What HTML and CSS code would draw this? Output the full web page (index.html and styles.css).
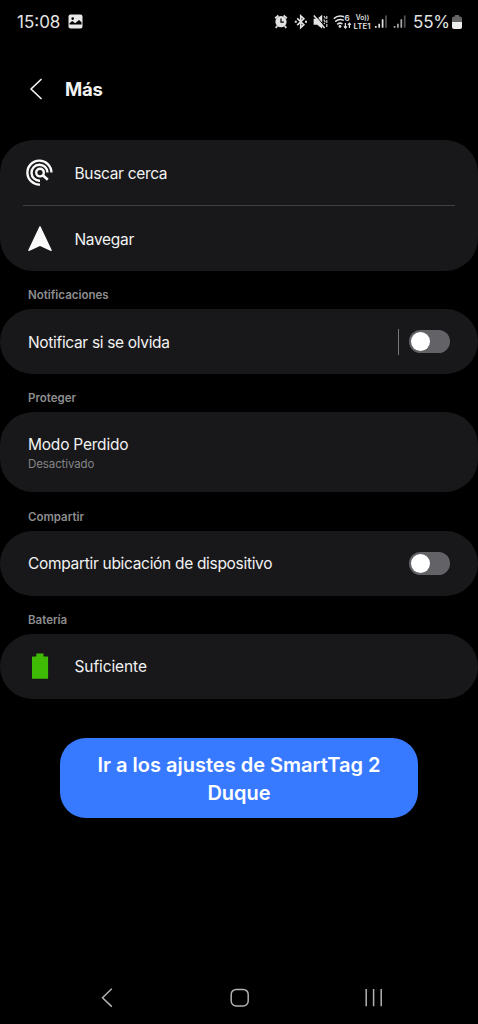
FILE: index.html
```html
<!DOCTYPE html>
<html lang="es">
<head>
<meta charset="utf-8">
<meta name="viewport" content="width=device-width">
<title>Más</title>
<link rel="stylesheet" href="styles.css">
</head>
<body>
<div class="screen">
  <div class="status">
    <span class="time">15:08</span>
    <svg class="photo" width="15" height="15" viewBox="0 0 15 15"><rect x=".5" y=".5" width="14" height="14" rx="2" fill="#e8e8e8"/><circle cx="4.7" cy="4.6" r="1.3" fill="#000"/><path d="M1.5 10.5V9.3L4.2 7l3 2.2L11 6l2.5 2.3v2.2z" fill="#000"/></svg>
    <svg class="indicators" width="136" height="18" viewBox="274 13 136 18" fill="none" stroke="#e2e2e2">
      <circle cx="281" cy="21.7" r="5.6" fill="#e2e2e2" stroke="none"/>
      <path d="M275.2 18.3l3.2-2.8M286.8 18.3l-3.2-2.8M277.3 26l-1.6 1.8M284.7 26l1.6 1.8" stroke-width="1.8"/>
      <path d="M281 18.5v3.7h2.8" stroke="#000" stroke-width="1.2"/>
      <path d="M297.2 18.3l6.7 6.4-3.2 3V15.8l3.2 3-6.7 6.4" stroke-width="1.6"/>
      <path d="M294.8 21.8h2M305 21.8h2" stroke-width="2"/>
      <path d="M313.6 18.8h3.6l5-4v14l-5-4h-3.6z" fill="#e2e2e2" stroke="none"/>
      <path d="M315.4 15l9.4 11.6" stroke="#000" stroke-width="1"/>
      <path d="M313.8 15.4l10.8 12.6" stroke-width="1.5"/>
      <path d="M324 16l1.2 2-1.2 2 1.2 2-1.2 2M326.8 16v11.5" stroke-width="1.1" stroke-dasharray="3 1"/>
      <path d="M333.8 18.6q4.6-4.2 10.2-1.8M335.2 21.6q4-3.4 8.6-1.2M337.2 24.4q2.6-2.2 5.2-.6" stroke-width="1.5"/>
      <circle cx="340" cy="26.4" r="1.4" fill="#e2e2e2" stroke="none"/>
      <path d="M345.4 23v5M343.9 26.3l1.5 1.7 1.5-1.7M349.4 28v-5M347.9 24.8l1.5-1.7 1.5 1.7" stroke-width="1.2"/>
      <g fill="#e2e2e2" stroke="none" font-family="Inter, sans-serif" font-weight="600">
        <text x="344.4" y="21" font-size="8">6</text>
        <text x="355.8" y="19.6" font-size="7" textLength="13.5" lengthAdjust="spacingAndGlyphs">Vo))</text>
        <text x="353.6" y="28.6" font-size="7.4" textLength="17" lengthAdjust="spacingAndGlyphs">LTE1</text>
      </g>
      <g stroke-width="1.7"><path d="M375.8 27.7v-1.7M379.2 27.7v-4M382.6 27.7v-8.5"/><path d="M386 27.7V15.5" stroke="#555"/><path d="M394.6 27.7v-1.7M397.9 27.7v-4M401.3 27.7v-8.5" stroke="#aaa"/><path d="M404.7 27.7V15.5" stroke="#555"/></g>
    </svg>
    <span class="percent">55%</span>
    <svg class="cell" width="10" height="14" viewBox="0 0 10 14"><path d="M3 0h4v1.4h1.2Q10 1.4 10 3.2V7H0V3.2Q0 1.4 1.8 1.4H3z" fill="#656565"/><path d="M0 7h10v5q0 2-2 2H2q-2 0-2-2z" fill="#ededed"/></svg>
  </div>

  <header class="header">
    <svg width="14" height="24" viewBox="0 0 14 24" fill="none" stroke="#f4f4f4" stroke-width="1.7" stroke-linecap="round" stroke-linejoin="round"><path d="M12 2.5 2 12l10 9.5"/></svg>
    <h1>Más</h1>
  </header>

  <section class="card links">
    <div class="row">
      <svg class="icon" width="28" height="28" viewBox="0 0 28 28" fill="none" stroke="#fafafa" stroke-width="2.4"><path d="M14 25.6A12 12 0 1 1 25.4 13.6"/><path d="M14 21.7A8 8 0 1 1 21.5 13.6"/><circle cx="14" cy="13.6" r="3.8"/><path d="m16.8 16.2 5 4.6" stroke-width="2.6"/></svg>
      <span class="label buscar">Buscar cerca</span>
    </div>
    <div class="row">
      <svg class="icon" width="28" height="28" viewBox="0 0 28 28"><path d="M13.3 1.7q.7-1.2 1.4 0l11 23.4q.3 1.2-.9.8L14 21 3.2 25.9q-1.2.4-.9-.8z" fill="#fafafa"/></svg>
      <span class="label navegar">Navegar</span>
    </div>
  </section>

  <h2>Notificaciones</h2>
  <section class="card row">
    <span class="label notificar">Notificar si se olvida</span>
    <span class="split"></span><span class="toggle"></span>
  </section>

  <h2>Proteger</h2>
  <section class="card mode">
    <span class="modo">Modo Perdido</span>
    <small>Desactivado</small>
  </section>

  <h2 class="compartir">Compartir</h2>
  <section class="card row short">
    <span class="label ubicacion">Compartir ubicación de dispositivo</span>
    <span class="toggle alone"></span>
  </section>

  <h2 class="bateria">Batería</h2>
  <section class="card row short">
    <svg class="icon" width="28" height="28" viewBox="0 0 28 28"><path d="M10.3 1.5h7.2v3h4q.6 0 .6.6v21q0 .6-.6.6H6.6q-.6 0-.6-.6v-21q0-.6.6-.6h3.7z" fill="#3fbb05"/></svg>
    <span class="label suficiente">Suficiente</span>
  </section>

  <button class="settings"><span>Ir a los ajustes de SmartTag 2</span><span>Duque</span></button>

  <nav class="nav">
    <svg width="280" height="22" viewBox="0 0 280 22" fill="none" stroke="#b2b2b2" stroke-width="1.5"><path d="M11.8 2.8 2.5 11.8l9.3 8.8"/><rect x="131.2" y="3.4" width="17" height="16.5" rx="5"/><path d="M266.2 3v17.2M273.6 3v17.2M281.2 3v17.2"/></svg>
  </nav>
</div>
</body>
</html>
```
FILE: styles.css
```css
* { box-sizing: border-box; }
body { margin: 0; background: #000; }
.screen {
  width: 478px;
  height: 1024px;
  display: flex;
  flex-direction: column;
  overflow: hidden;
  background: #000;
  color: #f2f2f2;
  font-family: Inter, Roboto, sans-serif;
  font-size: 15.5px;
  white-space: nowrap;
}
.status { height: 43px; padding: 0 16px 0 17px; display: flex; align-items: center; flex: none; }
.time { width: 51px; font-size: 17px; color: #e4e4e4; }
.indicators { margin-left: 191px; }
.percent { width: 39px; margin-left: 3px; font-size: 17px; letter-spacing: -.2px; color: #e4e4e4; }
.cell { flex: none; }
.header { height: 97px; padding: 0 29px 5px; display: flex; align-items: center; gap: 22px; flex: none; }
h1 { margin: 0; font-size: 18.5px; font-weight: 700; letter-spacing: -.3px; }
.card { background: #18181a; border-radius: 33px; flex: none; height: 65px; }
.row { display: flex; align-items: center; padding: 0 28px; }
.links { height: 131px; }
.links .row { height: 65px; }
.links .row + .row { height: 66px; margin: 0 23px; padding: 0 5px; border-top: 1px solid #414143; }
.short { height: 64.5px; }
.icon { flex: none; margin: 0 20.5px 0 -2px; }
.label { line-height: 20px; padding-top: 2px; }
.buscar { letter-spacing: -.32px; }
.navegar { letter-spacing: -.32px; }
.notificar { letter-spacing: -.33px; }
.ubicacion { letter-spacing: -.31px; }
.modo { letter-spacing: -.22px; line-height: 22px; }
.suficiente { letter-spacing: -.1px; }
h2 { margin: 0; padding: 0 28px; height: 38px; line-height: 48px; font-size: 11.5px; font-weight: 600; color: #8d8d8f; flex: none; }
.mode { height: 80px; padding: 22px 28px 0; display: flex; flex-direction: column; }
small { font-size: 11.5px; line-height: 16px; letter-spacing: -.1px; color: #858587; }
.compartir { height: 39px; line-height: 50px; }
.bateria { height: 38.5px; }
.split { width: 1px; height: 26px; background: #777779; margin-left: auto; }
.toggle { width: 41px; height: 23px; padding: 2px; border-radius: 12px; background: #636367; margin-left: 10.5px; }
.toggle::before { content: ""; display: block; width: 19px; height: 19px; border-radius: 50%; background: #fff; }
.alone { margin-left: auto; }
.settings { width: 358px; height: 80px; margin: 39.5px 60px 0; padding: 2px 0 0; border: 0; border-radius: 26px; background: #387aff; color: #fff; font: 600 20px/28px Inter, Roboto, sans-serif; display: flex; flex-direction: column; align-items: center; justify-content: center; flex: none; }
.nav { margin-top: auto; height: 38px; padding-left: 100px; }
.nav svg { overflow: visible; }
```
